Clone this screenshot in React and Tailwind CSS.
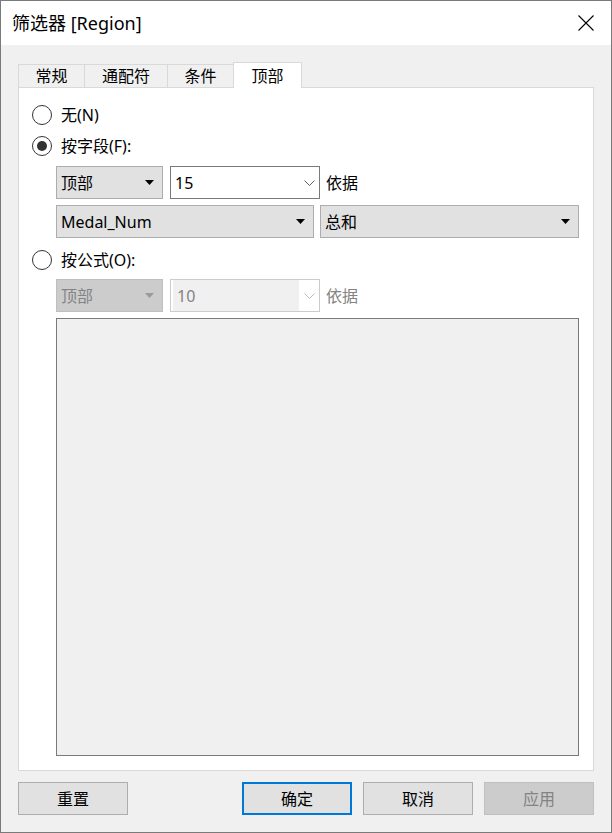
const font = { fontFamily: '"Noto Sans", "Noto Sans CJK SC", sans-serif' };

const Caret = ({ color = '#000' }) => (
  <svg width="9" height="5" viewBox="0 0 9 5" className="shrink-0">
    <path d="M0 0 H9 L4.5 5 Z" fill={color} />
  </svg>
);

const Chevron = ({ color = '#606060' }) => (
  <svg width="11" height="6" viewBox="0 0 11 6" className="shrink-0">
    <path d="M0.5 0.5 L5.5 5.5 L10.5 0.5" fill="none" stroke={color} strokeWidth="1" />
  </svg>
);

const Radio = ({ checked, label }) => (
  <div className="flex items-center h-[24px] gap-[9px]">
    <div className="w-[20px] h-[20px] rounded-full border border-[#333] bg-white flex items-center justify-center">
      {checked && <div className="w-[10px] h-[10px] rounded-full bg-[#333]" />}
    </div>
    <span className="text-[16px] leading-[20px] text-black">{label}</span>
  </div>
);

const Select = ({ width, label, disabled }) => (
  <div
    className={`flex items-center justify-between h-[33px] pl-[4px] pr-[8px] border ${
      disabled ? 'bg-[#cccccc] border-[#bfbfbf] text-[#838383]' : 'bg-[#e1e1e1] border-[#adadad] text-black'
    }`}
    style={{ width }}
  >
    <span className="text-[16px] leading-[20px]">{label}</span>
    <Caret color={disabled ? '#9a9a9a' : '#000'} />
  </div>
);

const Combo = ({ value, disabled }) => (
  <div
    className={`flex items-center w-[150px] h-[33px] border bg-white ${
      disabled ? 'border-[#cccccc]' : 'border-[#7a7a7a]'
    }`}
  >
    <div
      className={`flex-1 h-full flex items-center pl-[4px] text-[16px] leading-[20px] ${
        disabled ? 'text-[#838383] bg-[#f0f0f0] my-[3px] ml-[2px] h-[25px]' : 'text-black'
      }`}
    >
      {value}
    </div>
    <div className="w-[20px] flex justify-center">
      <Chevron color={disabled ? '#bcbcbc' : '#606060'} />
    </div>
  </div>
);

const Button = ({ label, primary, disabled }) => (
  <div
    className={`w-[110px] h-[33px] flex items-center justify-center text-[16px] leading-[20px] ${
      primary
        ? 'border-2 border-[#0078d7] bg-[#e1e1e1] text-black'
        : disabled
        ? 'border border-[#bfbfbf] bg-[#cccccc] text-[#838383]'
        : 'border border-[#adadad] bg-[#e1e1e1] text-black'
    }`}
  >
    {label}
  </div>
);

export default function App() {
  const tabs = [
    { label: '常规', w: 67 },
    { label: '通配符', w: 84 },
    { label: '条件', w: 67 },
  ];
  return (
    <div className="w-[612px] h-[833px] border border-[#7a7a7a] bg-[#f0f0f0] flex flex-col" style={font}>
      <div className="h-[44px] bg-white flex items-center justify-between pl-[11px] pr-[17px] shrink-0">
        <span className="text-[18px] leading-[24px] text-black">筛选器 [Region]</span>
        <svg width="16" height="16" viewBox="0 0 16 16">
          <path d="M0.5 0.5 L15.5 15.5 M15.5 0.5 L0.5 15.5" stroke="#000" strokeWidth="1.1" />
        </svg>
      </div>

      <div className="flex flex-col px-[17px] pt-[16px]">
        <div className="flex items-end h-[26px]">
          {tabs.map((t) => (
            <div
              key={t.label}
              className="h-[23px] border border-b-0 border-[#d9d9d9] -mr-px flex items-center justify-center text-[16px] leading-[20px] text-black"
              style={{ width: t.w }}
            >
              {t.label}
            </div>
          ))}
          <div className="h-[26px] w-[69px] border border-b-0 border-[#d9d9d9] bg-white flex items-center justify-center text-[16px] leading-[20px] text-black relative top-px z-10">
            顶部
          </div>
        </div>

        <div className="h-[684px] border border-[#d9d9d9] bg-white flex flex-col pl-[13px] pt-[15px]">
          <Radio label="无(N)" />
          <div className="mt-[7px]">
            <Radio checked label="按字段(F):" />
          </div>
          <div className="ml-[24px] mt-[8px] flex items-center gap-[7px]">
            <Select width={107} label="顶部" />
            <Combo value="15" />
            <span className="ml-[-1px] text-[16px] leading-[20px] text-black">依据</span>
          </div>
          <div className="ml-[24px] mt-[6px] flex items-center gap-[6px]">
            <Select width={258} label="Medal_Num" />
            <Select width={259} label="总和" />
          </div>
          <div className="mt-[10px]">
            <Radio label="按公式(O):" />
          </div>
          <div className="ml-[24px] mt-[7px] flex items-center gap-[7px]">
            <Select width={107} label="顶部" disabled />
            <Combo value="10" disabled />
            <span className="ml-[-1px] text-[16px] leading-[20px] text-[#838383]">依据</span>
          </div>
          <div className="ml-[24px] mt-[6px] w-[523px] h-[438px] border border-[#7a7a7a] bg-[#f0f0f0]" />
        </div>

        <div className="mt-[11px] flex items-center">
          <Button label="重置" />
          <div className="flex-1" />
          <div className="flex gap-[11px]">
            <Button label="确定" primary />
            <Button label="取消" />
            <Button label="应用" disabled />
          </div>
        </div>
      </div>
    </div>
  );
}
